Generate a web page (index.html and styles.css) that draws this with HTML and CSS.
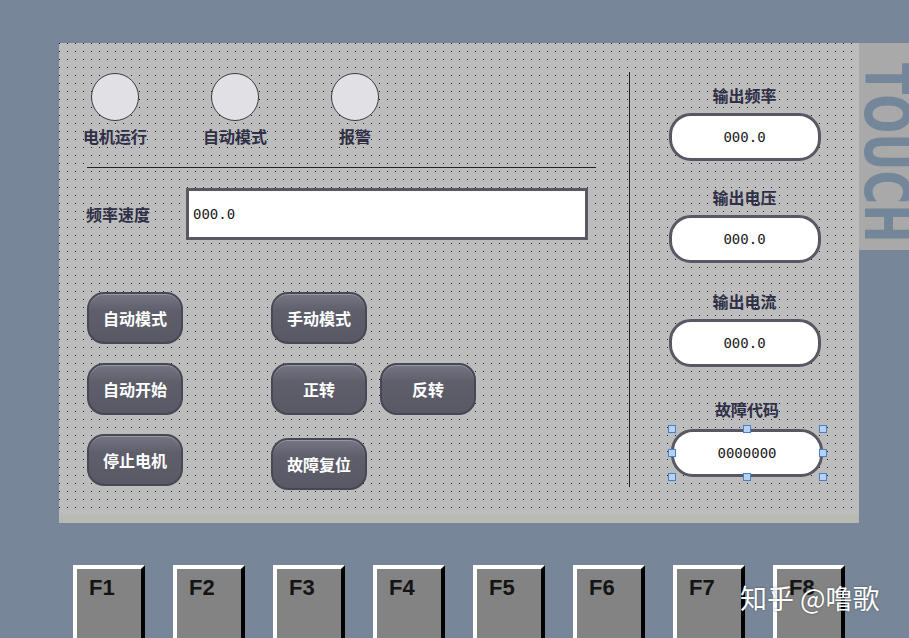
FILE: index.html
```html
<!DOCTYPE html>
<html lang="zh-CN">
<head>
    <meta charset="UTF-8">
    <meta name="viewport" content="width=device-width, initial-scale=1.0">
    <title>电机控制画面</title>
    <link rel="stylesheet" href="styles.css">
</head>
<body>
    <div class="stage">
        <div class="screen">
            <div class="canvas">
                <div class="left">
                    <div class="lamps">
                        <div class="lamp"><span class="lamp-light"></span><span class="label">电机运行</span></div>
                        <div class="lamp"><span class="lamp-light"></span><span class="label">自动模式</span></div>
                        <div class="lamp"><span class="lamp-light"></span><span class="label">报警</span></div>
                    </div>
                    <div class="rule"></div>
                    <div class="speed">
                        <span class="label speed-label">频率速度</span>
                        <div class="speed-field">000.0</div>
                    </div>
                    <div class="btn-grid">
                        <button class="btn">自动模式</button>
                        <button class="btn">手动模式</button>
                        <button class="btn first">自动开始</button>
                        <button class="btn">正转</button>
                        <button class="btn">反转</button>
                        <button class="btn first">停止电机</button>
                        <button class="btn low">故障复位</button>
                    </div>
                </div>
                <div class="divider"></div>
                <div class="readouts">
                    <div class="readout">
                        <span class="label">输出频率</span>
                        <div class="readout-value">000.0</div>
                    </div>
                    <div class="readout r2">
                        <span class="label">输出电压</span>
                        <div class="readout-value">000.0</div>
                    </div>
                    <div class="readout r3">
                        <span class="label">输出电流</span>
                        <div class="readout-value">000.0</div>
                    </div>
                    <div class="readout r4">
                        <span class="label">故障代码</span>
                        <div class="readout-value selected">
                            0000000
                            <span class="handle tl"></span><span class="handle tc"></span><span class="handle tr"></span>
                            <span class="handle ml"></span><span class="handle mr"></span>
                            <span class="handle bl"></span><span class="handle bc"></span><span class="handle br"></span>
                        </div>
                    </div>
                </div>
            </div>
        </div>
        <div class="brand"><span class="brand-text">TOUCH</span></div>
    </div>

    <div class="fkeys">
        <div class="fkey">F1</div>
        <div class="fkey">F2</div>
        <div class="fkey">F3</div>
        <div class="fkey">F4</div>
        <div class="fkey">F5</div>
        <div class="fkey">F6</div>
        <div class="fkey">F7</div>
        <div class="fkey">F8</div>
    </div>

    <div class="watermark">知乎 @噜歌</div>
</body>
</html>
```

FILE: styles.css
```css
body { margin: 0; height: 638px; overflow: hidden; position: relative; background: #778698; font-family: "Noto Sans CJK SC", sans-serif; }

.stage { display: flex; align-items: flex-start; padding: 43px 0 0 59px; }
.screen { width: 800px; height: 480px; background: #b9bab4; }
/* dotted editor grid: a 1px dot every 8px */
.canvas { height: 472px; display: flex; background-color: #bdbdbd;
    background-image: linear-gradient(to right, #bdbdbd 7px, transparent 7px), linear-gradient(to bottom, transparent 7px, #1a1a1a 7px);
    background-size: 8px 8px; background-position: -7px -7px; }

.label { font-size: 16px; line-height: 20px; font-weight: 700; color: #2f2f47; white-space: nowrap; }

.left { width: 570px; }
.lamps { display: flex; gap: 40px; padding: 30px 0 0 16px; }
.lamp { width: 80px; display: flex; flex-direction: column; align-items: center; gap: 5px; }
.lamp-light { width: 46px; height: 46px; border-radius: 50%; background: #e1e0e4; border: 1px solid #3c3c46; }

.rule { margin: 21px 0 0 28px; width: 509px; height: 1px; background: #222; }

.speed { display: flex; align-items: center; margin-top: 20px; padding-left: 27px; }
.speed-label { width: 100px; }
.speed-field { width: 392px; height: 46px; padding-left: 4px; border: 3px solid #585863; background: #fff; display: flex; align-items: center; font: 14px "DejaVu Sans Mono", monospace; color: #1a1a1a; }

.btn-grid { display: grid; grid-template-columns: 184px 109px 96px; grid-auto-rows: 52px; row-gap: 19px; margin: 52px 0 0 28px; }
.btn { width: 96px; height: 52px; box-sizing: border-box; border: 2px solid #474853; border-radius: 17px; background: linear-gradient(#757683, #5e5f6b 35%, #585965); box-shadow: inset 0 1px 0 rgba(255, 255, 255, 0.25); color: #fff; font: 700 16px "Noto Sans CJK SC", sans-serif; padding: 0; }
.btn.first { grid-column: 1; }
.btn.low { margin-top: 4px; }

.divider { width: 1px; height: 415px; margin-top: 29px; background: #222; }

.readouts { flex: 1; display: flex; flex-direction: column; align-items: center; padding-top: 42px; }
.readout { display: flex; flex-direction: column; align-items: center; gap: 8px; }
.readout.r2 { margin-top: 26px; }
.readout.r3 { margin-top: 28px; }
.readout.r4 { margin: 32px 0 0 5px; gap: 10px; }
.readout-value { width: 146px; height: 42px; border: 3px solid #585863; border-radius: 22px; background: #fff; display: flex; align-items: center; justify-content: center; font: 14px "DejaVu Sans Mono", monospace; color: #1a1a1a; }
.readout-value.selected { position: relative; }
.handle { position: absolute; width: 6px; height: 6px; background: #b4d2f4; border: 1px solid #4a7fc4; }
.handle.tl, .handle.tc, .handle.tr { top: -7px; }
.handle.bl, .handle.bc, .handle.br { bottom: -7px; }
.handle.ml, .handle.mr { top: calc(50% - 4px); }
.handle.tl, .handle.ml, .handle.bl { left: -6px; }
.handle.tr, .handle.mr, .handle.br { right: -7px; }
.handle.tc, .handle.bc { left: calc(50% - 4px); }

/* vendor mark, set sideways and cut by the bezel edge */
.brand { width: 50px; height: 207px; padding-top: 20px; box-sizing: border-box; overflow: hidden; background: #a9a9a9; writing-mode: vertical-rl; }
.brand-text { display: inline-block; transform: scaleY(0.74); transform-origin: top; font-family: "DejaVu Sans", sans-serif; font-weight: 700; font-size: 62px; line-height: 45px; color: #74869a; }

.fkeys { display: flex; gap: 28px; padding-left: 73px; margin-top: 42px; }
.fkey { width: 72px; height: 80px; box-sizing: border-box; border: 4px solid; border-color: #fff #000 #000 #fff; background: #838383; padding: 8px 0 0 12px; font: 700 22px/22px "Liberation Sans", Arial, sans-serif; color: #141414; }

.watermark { position: absolute; left: 740px; top: 580px; font-size: 27px; line-height: 36px; color: #fff; text-shadow: 0 0 2px rgba(0, 0, 0, 0.5); }
```
